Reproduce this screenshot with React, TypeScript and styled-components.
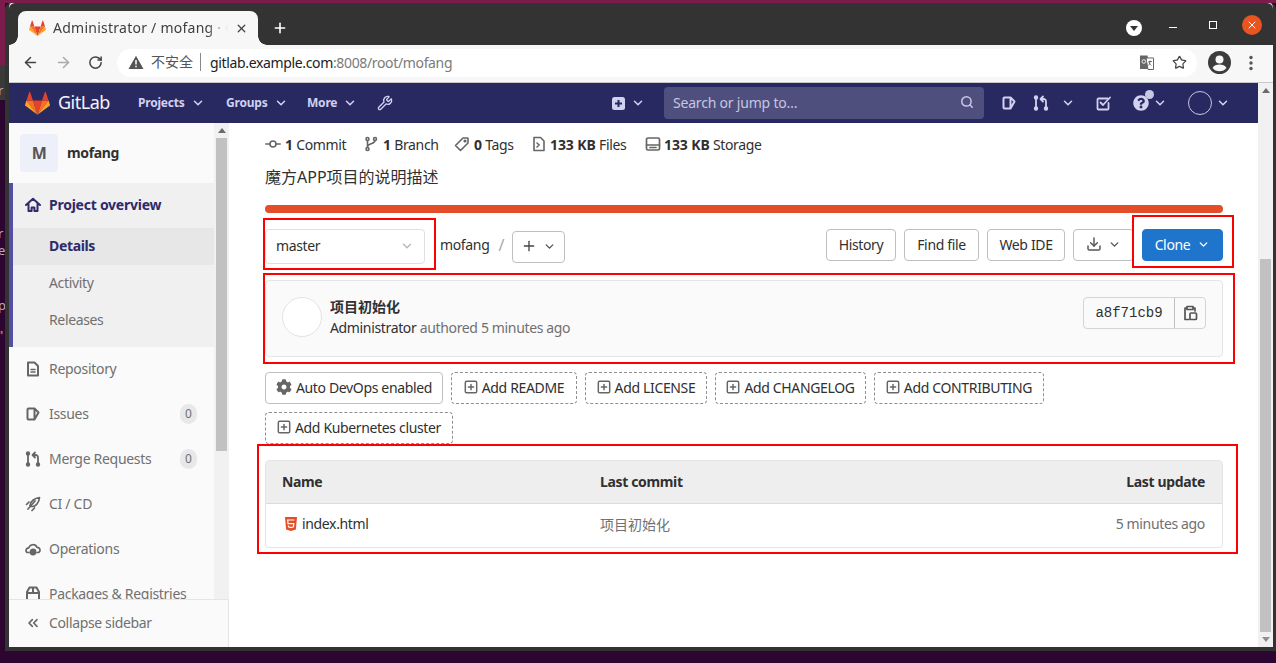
import React from "react";
import styled, { createGlobalStyle } from "styled-components";
import { ArrowLeft, ArrowRight, RotateCw, Star, X, Plus, ChevronDown, Search, Wrench, Download, ChevronsLeft } from "lucide-react";
import { FaCog, FaQuestionCircle } from "react-icons/fa";

const FONT = `"Noto Sans", "Noto Sans CJK SC", sans-serif`;

const GlobalStyle = createGlobalStyle`
  html, body { margin: 0; padding: 0; width: 1276px; height: 663px; overflow: hidden; background: #2c0630; }
  body { font-family: ${FONT}; font-size: 14px; letter-spacing: -0.35px; color: #303030; }
  * { box-sizing: border-box; }
`;

const Desktop = styled.div`
  display: flex; width: 1276px; height: 663px; overflow: hidden;
  background: linear-gradient(to right, #7c1c4c 0, #7c1c4c 100%) top / 100% 3px no-repeat, #2c0630;
`;
const Gutter = styled.div`
  width: 5px; flex: none; padding-top: 83px; display: flex; flex-direction: column; overflow: hidden;
  background: linear-gradient(to bottom, #7c1c4c 0, #7c1c4c 65px, #3a3a3a 65px, #3a3a3a 100px, #2c0630 100px);
`;
const GutterGlyph = styled.span<{ $gap: number }>`
  font-size: 13px; line-height: 14px; color: #b9aebb; margin-left: -2px; margin-bottom: ${p => p.$gap}px;
`;
const BrowserWindow = styled.div`
  width: 1271px; height: 648px; margin-top: 3px; flex: none; display: flex; flex-direction: column;
  background: #fff; border: solid #333; border-width: 0 3px 4px 4px; border-radius: 6px 6px 0 0; position: relative;
`;
const TitleBar = styled.div`
  height: 42px; flex: none; background: #333; display: flex; align-items: flex-end; padding-left: 9px; color: #fff;
  border-radius: 6px 6px 0 0;
`;
const Tab = styled.div`
  position: relative; width: 240px; height: 34px; background: #f7f7f7; border-radius: 8px 8px 0 0;
  display: flex; align-items: center; padding: 0 10px 0 11px; gap: 7px; color: #3c4043; font-size: 14px; letter-spacing: 0.25px;
  &::before, &::after { content: ""; position: absolute; bottom: 0; width: 9px; height: 9px; }
  &::before { left: -9px; background: radial-gradient(circle at 0 0, #333 8.5px, #f7f7f7 9px); }
  &::after { right: -9px; background: radial-gradient(circle at 100% 0, #333 8.5px, #f7f7f7 9px); }
`;
const TabTitle = styled.span`
  flex: 1; white-space: nowrap; overflow: hidden; padding-bottom: 2px;
  mask-image: linear-gradient(to right, #000 88%, transparent 100%);
`;
const NewTab = styled.div`
  width: 16px; height: 16px; margin: 0 0 9px 14px; display: flex;
`;
const TitleSpacer = styled.div`flex: 1;`;
const ProfileDot = styled.div`
  width: 16px; height: 16px; border-radius: 50%; background: #fff; margin: 0 11px 9px 0; display: flex; align-items: center; justify-content: center;
  &::after { content: ""; border: 4px solid transparent; border-top: 5px solid #333; border-bottom: 0; }
`;
const WinBtn = styled.div`
  width: 40px; height: 34px; display: flex; align-items: center; justify-content: center; padding-bottom: 6px;
`;
const MinLine = styled.div`width: 8px; height: 1px; background: #fff; margin-top: 4px;`;
const MaxBox = styled.div`width: 8px; height: 8px; border: 1px solid #fff;`;
const CloseCircle = styled.div`
  width: 20px; height: 20px; border-radius: 50%; background: #e95420; display: flex; align-items: center; justify-content: center; margin: 0 11px 10px 9px;
`;
const Toolbar = styled.div`
  height: 38px; flex: none; background: #f7f7f7; border-bottom: 1px solid #c8c8c8; display: flex; align-items: center; padding: 0 0 1px 13px;
`;
const ToolBtn = styled.div<{ $w: number; $pl?: number }>`
  width: ${p => p.$w}px; padding-left: ${p => p.$pl ?? 0}px; margin-bottom: 1px; flex: none; display: flex; align-items: center;
`;
const UrlPill = styled.div`
  width: 1080px; height: 28px; flex: none; border-radius: 14px; background: #fff; display: flex; align-items: center; padding: 0 10px 2px 11px;
  font-size: 14px; color: #7a7a7a;
`;
const InsecureText = styled.span`
  margin-left: 7px; color: #555; padding-right: 7px; border-right: 1px solid #888; line-height: 18px; margin-right: 9px; letter-spacing: 0; font-size: 14px;
`;
const Host = styled.span`color: #202124;`;
const PillSpacer = styled.div`flex: 1;`;
const PillIcon = styled.div<{ $mr: number }>`display: flex; margin-right: ${p => p.$mr}px;`;
const Viewport = styled.div`flex: 1; display: flex; min-height: 0;`;
const Page = styled.div`flex: 1; min-width: 0; display: flex; flex-direction: column;`;
const Track = styled.div<{ $w: number }>`
  width: ${p => p.$w}px; flex: none; background: #f1f1f1; display: flex; flex-direction: column; align-items: center;
`;
const ArrowUp = styled.div`
  flex: none; margin-top: 5px; border: 4px solid transparent; border-top: 0; border-bottom: 5px solid #6b6b6b;
`;
const ArrowDown = styled.div`
  flex: none; margin-top: auto; margin-bottom: 5px; border: 4px solid transparent; border-bottom: 0; border-top: 5px solid #8f8f8f;
`;
const Thumb = styled.div<{ $top: number; $h: number }>`
  width: 11px; height: ${p => p.$h}px; margin-top: ${p => p.$top}px; background: #c1c1c1; flex: none;
`;
const NavBar = styled.div`
  height: 40px; flex: none; background: #292961; display: flex; align-items: center; padding: 0 28px 0 16px; color: #fff;
`;
const Brand = styled.div`
  font-size: 18px; letter-spacing: -0.5px; color: #f4f4fb; margin: 0 27px 0 8px; width: 53px; white-space: nowrap; padding-bottom: 2px;
`;
const NavLink = styled.div<{ $w: number }>`
  width: ${p => p.$w}px; flex: none; display: flex; align-items: center; gap: 6px; color: #d1d1f0; font-size: 12px; font-weight: 700; letter-spacing: -0.2px; white-space: nowrap;
  padding-bottom: 1px;
`;
const NavIcon = styled.div<{ $w: number; $gap?: number }>`
  width: ${p => p.$w}px; gap: ${p => p.$gap ?? 0}px; flex: none; display: flex; align-items: center; position: relative;
`;
const NavSpacer = styled.div`flex: 1;`;
const SearchBox = styled.div`
  width: 320px; height: 32px; flex: none; border-radius: 4px; background: #4f4f7d; display: flex; align-items: center; justify-content: space-between;
  padding: 0 10px 2px 9px; color: #c6c6e4; font-size: 14px; margin-right: 17px; letter-spacing: -0.2px;
`;
const HelpDot = styled.span`
  position: absolute; left: 12px; top: -5px; width: 9px; height: 9px; border-radius: 50%; background: #c8c8e6;
`;
const UserCircle = styled.div`
  width: 24px; height: 24px; border-radius: 50%; border: 1px solid #c6c6e4; flex: none;
`;
const Body = styled.div`flex: 1; min-height: 0; display: flex;`;
const Sidebar = styled.aside`
  width: 220px; flex: none; background: #fafafa; display: flex; flex-direction: column; overflow: hidden;
`;
const SideTop = styled.div`flex: 1; min-height: 0; display: flex;`;
const SideNav = styled.nav`flex: 1; min-width: 0; overflow: hidden; display: flex; flex-direction: column;`;
const ProjectHead = styled.div`
  height: 60px; flex: none; display: flex; align-items: center; padding: 0 0 0 11px; gap: 9px; font-weight: 700; color: #303030;
`;
const ProjectName = styled.span`padding-bottom: 2px;`;
const ProjectAvatar = styled.div`
  width: 38px; height: 38px; border-radius: 4px; background: #eef0f9; display: flex; align-items: center; justify-content: center;
  font-size: 16px; font-weight: 700; color: #555;
`;
const ActiveGroup = styled.div`
  flex: none; background: #f0f0f0; border-left: 4px solid #554fa3; padding-bottom: 8px; display: flex; flex-direction: column;
`;
const GroupHead = styled.div`
  height: 45px; display: flex; align-items: center; gap: 8px; padding: 0 0 2px 12px; font-weight: 700; color: #2f2a6b; letter-spacing: -0.25px;
`;
const SubItem = styled.div<{ $active?: boolean }>`
  height: 37px; display: flex; align-items: center; padding: 0 0 2px 36px;
  color: ${p => (p.$active ? "#2f2a6b" : "#707070")}; font-weight: ${p => (p.$active ? 700 : 400)};
  background: ${p => (p.$active ? "#e7e7e7" : "transparent")};
`;
const SideItem = styled.div`
  height: 45px; flex: none; display: flex; align-items: center; gap: 8px; padding: 0 17px 2px 16px; color: #707070; letter-spacing: -0.3px;
`;
const ItemLabel = styled.span`flex: 1; white-space: nowrap;`;
const Badge = styled.span`
  width: 17px; height: 20px; border-radius: 10px; background: #e8e8e8; font-size: 12px; display: flex; align-items: center; justify-content: center; color: #707070; letter-spacing: 0;
`;
const Collapse = styled.div`
  height: 48px; flex: none; border-top: 1px solid #e5e5e5; border-right: 1px solid #e5e5e5; display: flex; align-items: center; gap: 8px; padding: 0 0 2px 16px; color: #707070;
`;
const Content = styled.main`
  flex: 1; min-width: 0; padding: 11px 35px 0 36px; display: flex; flex-direction: column; background: #fff;
`;
const Stats = styled.div`display: flex; align-items: center; height: 20px;`;
const Stat = styled.div<{ $w: number; $gap?: number }>`
  width: ${p => p.$w}px; flex: none; display: flex; align-items: center; gap: ${p => p.$gap ?? 4}px; white-space: nowrap; color: #303030;
`;
const Strong = styled.b`font-weight: 700; letter-spacing: -0.1px;`;
const Description = styled.p`
  margin: 12px 0 0; font-size: 16px; line-height: 22px; letter-spacing: 0; color: #303030;
`;
const LangBar = styled.div`
  margin-top: 17px; height: 8px; border-radius: 4px; background: #e44d2a; flex: none;
`;
const TreeRow = styled.div`
  margin-top: 16px; height: 35px; display: flex; align-items: flex-start; flex: none;
`;
const BranchSelect = styled.div`
  width: 160px; height: 35px; border: 1px solid #dfdfdf; border-radius: 4px; display: flex; align-items: center; justify-content: space-between; padding: 0 10px 2px; background: #fff;
  color: #303030;
`;
const Crumb = styled.span`margin: 7px 0 0 15px; line-height: 18px;`;
const Slash = styled.span`margin: 7px 8px 0 9px; color: #a7a7a7; font-size: 16px; line-height: 18px;`;
const Btn = styled.div<{ $w: number; $mr?: number }>`
  width: ${p => p.$w}px; margin-right: ${p => p.$mr ?? 8}px; height: 32px; flex: none; border: 1px solid #bfbfbf; border-radius: 4px; background: #fff;
  display: flex; align-items: center; justify-content: center; gap: 6px; color: #303030; white-space: nowrap; padding-bottom: 2px;
`;
const PlusBtn = styled(Btn)`margin-top: 2px;`;
const RowSpacer = styled.div`flex: 1;`;
const CloneBtn = styled(Btn)`
  background: #1f75cb; border-color: #1f75cb; color: #fff; margin-right: 0; gap: 7px;
`;
const CommitBox = styled.div`
  margin-top: 16px; height: 77px; flex: none; border: 1px solid #e5e5e5; border-radius: 4px; background: #fafafa;
  display: flex; align-items: flex-start; padding: 16px 16px 0 16px;
`;
const CommitAvatar = styled.div`
  width: 40px; height: 40px; border-radius: 50%; border: 1px solid #e3e3e3; background: #fff; flex: none; margin-right: 8px;
`;
const CommitInfo = styled.div`flex: 1; display: flex; flex-direction: column;`;
const CommitTitle = styled.div`font-weight: 700; line-height: 20px; letter-spacing: 0;`;
const CommitMeta = styled.div`margin-top: 1px; line-height: 20px; color: #707070;`;
const Author = styled.span`color: #303030;`;
const ShaGroup = styled.div`
  display: flex; height: 32px; width: 123px; flex: none; border: 1px solid #d4d4d4; border-radius: 4px; background: #fafafa;
`;
const Sha = styled.div`
  width: 91px; display: flex; align-items: center; justify-content: center; border-right: 1px solid #bfbfbf;
  font-family: "Liberation Mono", "DejaVu Sans Mono", monospace; font-size: 14px; letter-spacing: 0; color: #303030;
`;
const CopyBtn = styled.div`flex: 1; display: flex; align-items: center; justify-content: center;`;
const ActionRows = styled.div`
  margin-top: 15px; display: flex; flex-direction: column; gap: 8px; flex: none;
`;
const ActionRow = styled.div`display: flex; gap: 8px;`;
const ActionBtn = styled.div<{ $w: number; $dashed?: boolean }>`
  width: ${p => p.$w}px; height: 32px; flex: none; border: 1px ${p => (p.$dashed ? "dashed #8f8f8f" : "solid #bfbfbf")}; border-radius: 4px;
  display: flex; align-items: center; justify-content: center; gap: 4px; white-space: nowrap; color: #303030; padding-bottom: 2px;
`;
const FilesTable = styled.div`
  margin-top: 16px; height: 88px; flex: none; border: 1px solid #e5e5e5; border-radius: 4px; display: flex; flex-direction: column; overflow: hidden;
`;
const TableHead = styled.div`
  height: 43px; flex: none; background: #eee; border-bottom: 1px solid #dcdcdc; display: grid; grid-template-columns: 318px 1fr auto; align-items: center; padding: 0 17px 2px 16px;
  font-weight: 700; color: #303030;
`;
const TableRow = styled.div`
  flex: 1; display: grid; grid-template-columns: 318px 1fr auto; align-items: center; padding: 0 17px 4px 16px;
`;
const FileName = styled.div`display: flex; align-items: center; gap: 4px; padding-left: 2px; color: #303030;`;
const Muted = styled.div`color: #707070; letter-spacing: 0;`;
const MutedTime = styled.div`color: #707070;`;
const Annotation = styled.div<{ $x: number; $y: number; $w: number; $h: number }>`
  position: absolute; left: ${p => p.$x}px; top: ${p => p.$y}px; width: ${p => p.$w}px; height: ${p => p.$h}px; border: 2px solid #f00; pointer-events: none;
`;

const Tanuki = ({ size }: { size: number }) => (
  <svg width={size} height={size} viewBox="0 0 36 36" style={{ flex: "none" }}>
    <path d="M18 34.1L24.6 13.7H11.4z" fill="#E24329" />
    <path d="M18 34.1L11.4 13.7H2.1z" fill="#FC6D26" />
    <path d="M2.1 13.7L.1 19.9c-.2.6 0 1.2.5 1.5L18 34.1z" fill="#FCA326" />
    <path d="M2.1 13.7h9.3L7.4 1.4c-.2-.6-1.1-.6-1.3 0z" fill="#E24329" />
    <path d="M18 34.1l6.6-20.4h9.3z" fill="#FC6D26" />
    <path d="M33.9 13.7l2 6.2c.2.6 0 1.2-.5 1.5L18 34.1z" fill="#FCA326" />
    <path d="M33.9 13.7h-9.3l4-12.3c.2-.6 1.1-.6 1.3 0z" fill="#E24329" />
  </svg>
);

type IP = { c?: string; s?: number };
const S = ({ c = "#666", s = 16, children, w = 1.8 }: IP & { children: React.ReactNode; w?: number }) => (
  <svg width={s} height={s} viewBox="0 0 16 16" fill="none" stroke={c} strokeWidth={w} strokeLinecap="round" strokeLinejoin="round" style={{ flex: "none" }}>
    {children}
  </svg>
);
const HomeI = (p: IP) => <S {...p} w={2}><path d="M1 8 8 1.8 15 8M3.5 6.5V14H6.6v-3.5h2.8V14h3.1V6.5" /></S>;
const DocI = (p: IP) => <S {...p} w={2}><path d="M3 1.5h6.5L13 5v9.5H3z" /><path d="M6 8.5h4M6 11h4" strokeWidth="1.5" /></S>;
const IssueI = (p: IP) => <S {...p} w={2}><path d="M9.5 2.5H3.5a1 1 0 0 0-1 1v9a1 1 0 0 0 1 1h6M9.5 2.5l4 4-4 7z" /></S>;
const MergeI = (p: IP) => (
  <S {...p}>
    <circle cx="3" cy="2.5" r="1.3" fill={p.c ?? "#666"} /><circle cx="3" cy="13.5" r="1.3" fill={p.c ?? "#666"} /><circle cx="13" cy="13.5" r="1.3" fill={p.c ?? "#666"} />
    <path d="M3 3v10M13 13V6.5a2.5 2.5 0 0 0-2.5-2.5H8M10 1.5 7.5 4 10 6.5" />
  </S>
);
const RocketI = (p: IP) => <S {...p} w={1.7}><path d="M14.5 1.5C10 2 5.5 5 5 9.5c2 1.8 5 1 7-1.5 1.6-2 2.3-4.3 2.5-6.5z" /><path d="M10 5 3 13M1.5 8.5 4 6M7 14.5 9.5 12" /></S>;
const CloudI = (p: IP) => <S {...p} w={1.7}><path d="M4 11.5H2.8A1.8 1.8 0 0 1 1 9.5 3 3 0 0 1 3.8 6.8 4.4 4.4 0 0 1 12 6.3 2.7 2.7 0 0 1 15 9.2a2.2 2.2 0 0 1-2.3 2.3H12" /><circle cx="8" cy="11" r="2.6" fill={p.c ?? "#666"} /></S>;
const PackageI = (p: IP) => <S {...p} w={2}><path d="M2 14.5V6l2.5-4.5h7L14 6v8.5zM2 7h12M8 1.5V7" /></S>;
const CommitI = (p: IP) => <S {...p} w={1.6}><circle cx="8" cy="8" r="3" /><path d="M.8 8H5M11 8h4.2" /></S>;
const BranchI = (p: IP) => <S {...p} w={1.6}><circle cx="4.5" cy="3" r="1.5" /><circle cx="4.5" cy="13" r="1.5" /><circle cx="12" cy="3" r="1.5" /><path d="M4.5 4.5v7M12 4.5C12 8 5 7.5 4.5 10.5" /></S>;
const TagI = (p: IP) => <S {...p} w={1.6}><path d="M9 2h4.5a.5.5 0 0 1 .5.5V7l-7.5 7.5L1.5 9.5z" /><circle cx="11" cy="5" r=".8" /></S>;
const FileI = (p: IP) => <S {...p} w={1.6}><path d="M3 1.5h6.5L13 5v9.5H3z" /><path d="M6 7l2.2 2L6 11" /></S>;
const StorageI = (p: IP) => <S {...p} w={1.7}><rect x="1.5" y="2" width="13" height="12" rx="1.5" /><path d="M1.5 9h13M5 11.5h6" /></S>;
const AddI = () => <S c="#666" w={1.7} s={14}><rect x="1.5" y="1.5" width="13" height="13" rx="1.5" /><path d="M8 5v6M5 8h6" /></S>;
const CopyI = () => <S c="#555" w={1.7}><path d="M5 3H3v11.5h4M11 3h2v3M5 1.5h6v3H5z" /><rect x="8" y="8" width="6.5" height="6.5" rx="1" /></S>;
const TodoI = (p: IP) => <S {...p} w={1.8}><path d="M12.5 8v5.5a1 1 0 0 1-1 1h-9a1 1 0 0 1-1-1v-9a1 1 0 0 1 1-1h9" /><path d="M4.5 7.5 7 10l7-7.5" /></S>;
const PlusSquareI = () => (
  <svg width="13" height="13" viewBox="0 0 13 13" style={{ flex: "none" }}>
    <rect width="13" height="13" rx="2.5" fill="#d1d1f0" />
    <path d="M6.5 3v7M3 6.5h7" stroke="#292961" strokeWidth="2" />
  </svg>
);
const Html5I = () => (
  <svg width="14" height="16" viewBox="0 0 14 16" style={{ flex: "none" }}>
    <path d="M1 1h12l-1.1 12.4L7 15l-4.900-1.600z" fill="#e44d26" />
    <path d="M10.3 4H3.7l.3 3.600h5.800l-.3 3.200L7 11.600l-2.500-.8-.1-1.300" fill="none" stroke="#fff" strokeWidth="1.2" />
  </svg>
);
const WarnI = () => (
  <svg width="16" height="15" viewBox="0 0 16 15" style={{ flex: "none" }}>
    <path d="M8 .8 15.5 14H.5z" fill="#555" />
    <path d="M8 5v4.5M8 10.8v1.4" stroke="#fff" strokeWidth="1.5" />
  </svg>
);
const TranslateI = () => (
  <svg width="14" height="15" viewBox="0 0 14 15" style={{ flex: "none" }}>
    <path d="M0 .5h7.5l3 13.500H0z" fill="#666" />
    <path d="M6 3h7.500v11.500H8z" fill="#fff" stroke="#666" />
    <circle cx="3.8" cy="6.5" r="1.8" fill="none" stroke="#fff" strokeWidth=".9" />
    <path d="M8.5 6.5h3.5M10 5.5c0 2.5-.5 4-1.5 5M9 7c.5 2 1.5 3 2.5 3.5" fill="none" stroke="#555" strokeWidth=".8" />
  </svg>
);
const AccountI = () => (
  <svg width="23" height="23" viewBox="0 0 23 23" style={{ flex: "none" }}>
    <circle cx="11.5" cy="11.5" r="11.5" fill="#3c3c3c" />
    <circle cx="11.5" cy="8.5" r="4" fill="#f7f7f7" />
    <path d="M4.5 17c1.500-2.700 4-3.500 7-3.500s5.500.8 7 3.500c-1.500 2-4 3.300-7 3.300s-5.500-1.300-7-3.300z" fill="#f7f7f7" />
  </svg>
);
const DotsI = () => (
  <svg width="4" height="16" viewBox="0 0 4 16" style={{ flex: "none", marginBottom: 1 }}>
    <circle cx="2" cy="2.5" r="1.7" fill="#555" /><circle cx="2" cy="8" r="1.7" fill="#555" /><circle cx="2" cy="13.5" r="1.7" fill="#555" />
  </svg>
);
const Chev = ({ c = "#d1d1f0", s = 14 }: IP) => <ChevronDown size={s} color={c} strokeWidth={2.6} style={{ flex: "none" }} />;

const sideItems = [
  { label: "Repository", icon: <DocI /> },
  { label: "Issues", icon: <IssueI />, badge: "0" },
  { label: "Merge Requests", icon: <MergeI />, badge: "0" },
  { label: "CI / CD", icon: <RocketI /> },
  { label: "Operations", icon: <CloudI /> },
  { label: "Packages & Registries", icon: <PackageI /> },
];

const addButtons: { label: string; w: number }[] = [
  { label: "Add README", w: 126 },
  { label: "Add LICENSE", w: 122 },
  { label: "Add CHANGELOG", w: 151 },
  { label: "Add CONTRIBUTING", w: 170 },
];

export default function App() {
  return (
    <Desktop>
      <GlobalStyle />
      <Gutter>
        <GutterGlyph $gap={129}>r</GutterGlyph>
        <GutterGlyph $gap={3}>r</GutterGlyph>
        <GutterGlyph $gap={41}>e</GutterGlyph>
        <GutterGlyph $gap={16}>p</GutterGlyph>
        <GutterGlyph $gap={0}>"</GutterGlyph>
      </Gutter>
      <BrowserWindow>
        <TitleBar>
          <Tab>
            <Tanuki size={17} />
            <TabTitle>Administrator / mofang · GitLab</TabTitle>
            <X size={13} color="#444" strokeWidth={2.4} />
          </Tab>
          <NewTab><Plus size={16} color="#fff" strokeWidth={2.4} /></NewTab>
          <TitleSpacer />
          <ProfileDot />
          <WinBtn><MinLine /></WinBtn>
          <WinBtn><MaxBox /></WinBtn>
          <CloseCircle><X size={12} color="#fff" strokeWidth={2} /></CloseCircle>
        </TitleBar>
        <Toolbar>
          <ToolBtn $w={33}><ArrowLeft size={17} color="#444" strokeWidth={2.2} /></ToolBtn>
          <ToolBtn $w={33}><ArrowRight size={17} color="#aaa" strokeWidth={2.2} /></ToolBtn>
          <ToolBtn $w={29}><RotateCw size={15} color="#444" strokeWidth={2.4} /></ToolBtn>
          <UrlPill>
            <WarnI />
            <InsecureText>不安全</InsecureText>
            <Host>gitlab.example.com</Host>:8008/root/mofang
            <PillSpacer />
            <PillIcon $mr={18}><TranslateI /></PillIcon>
            <PillIcon $mr={0}><Star size={15} color="#444" strokeWidth={2} /></PillIcon>
          </UrlPill>
          <ToolBtn $w={52} $pl={11}><AccountI /></ToolBtn>
          <DotsI />
        </Toolbar>
        <Viewport>
          <Page>
            <NavBar>
              <Tanuki size={25} />
              <Brand>GitLab</Brand>
              <NavLink $w={88}>Projects<Chev /></NavLink>
              <NavLink $w={81}>Groups<Chev /></NavLink>
              <NavLink $w={70}>More<Chev /></NavLink>
              <NavIcon $w={20}><Wrench size={16} color="#d1d1f0" strokeWidth={2} /></NavIcon>
              <NavSpacer />
              <NavIcon $w={52} $gap={6}><PlusSquareI /><Chev /></NavIcon>
              <SearchBox>Search or jump to…<Search size={14} color="#c6c6e4" strokeWidth={2.6} /></SearchBox>
              <NavIcon $w={32}><IssueI c="#d1d1f0" /></NavIcon>
              <NavIcon $w={63} $gap={12}><MergeI c="#d1d1f0" /><Chev /></NavIcon>
              <NavIcon $w={37}><TodoI c="#d1d1f0" /></NavIcon>
              <NavIcon $w={55} $gap={4}><FaQuestionCircle size={16} color="#d1d1f0" /><HelpDot /><Chev /></NavIcon>
              <NavIcon $w={42} $gap={4}><UserCircle /><Chev /></NavIcon>
            </NavBar>
            <Body>
              <Sidebar>
                <SideTop>
                  <SideNav>
                    <ProjectHead><ProjectAvatar>M</ProjectAvatar><ProjectName>mofang</ProjectName></ProjectHead>
                    <ActiveGroup>
                      <GroupHead><HomeI c="#2f2a6b" />Project overview</GroupHead>
                      <SubItem $active>Details</SubItem>
                      <SubItem>Activity</SubItem>
                      <SubItem>Releases</SubItem>
                    </ActiveGroup>
                    {sideItems.map(i => (
                      <SideItem key={i.label}>
                        {i.icon}
                        <ItemLabel>{i.label}</ItemLabel>
                        {i.badge && <Badge>{i.badge}</Badge>}
                      </SideItem>
                    ))}
                  </SideNav>
                  <Track $w={15}>
                    <ArrowUp />
                    <Thumb $top={5} $h={313} />
                  </Track>
                </SideTop>
                <Collapse><ChevronsLeft size={16} color="#666" strokeWidth={2.4} />Collapse sidebar</Collapse>
              </Sidebar>
              <Content>
                <Stats>
                  <Stat $w={98}><CommitI /><span><Strong>1</Strong> Commit</span></Stat>
                  <Stat $w={91}><BranchI /><span><Strong>1</Strong> Branch</span></Stat>
                  <Stat $w={77}><TagI /><span><Strong>0</Strong> Tags</span></Stat>
                  <Stat $w={114} $gap={3}><FileI /><span><Strong>133 KB</Strong> Files</span></Stat>
                  <Stat $w={120} $gap={3}><StorageI /><span><Strong>133 KB</Strong> Storage</span></Stat>
                </Stats>
                <Description>魔方APP项目的说明描述</Description>
                <LangBar />
                <TreeRow>
                  <BranchSelect>master<Chev c="#bbb" s={14} /></BranchSelect>
                  <Crumb>mofang</Crumb>
                  <Slash>/</Slash>
                  <PlusBtn $w={53} $mr={0}><Plus size={16} color="#444" strokeWidth={2} /><Chev c="#555" s={13} /></PlusBtn>
                  <RowSpacer />
                  <Btn $w={70}>History</Btn>
                  <Btn $w={75}>Find file</Btn>
                  <Btn $w={78}>Web IDE</Btn>
                  <Btn $w={61}><Download size={16} color="#555" strokeWidth={2.2} /><Chev c="#555" s={13} /></Btn>
                  <CloneBtn $w={81}>Clone<Chev c="#fff" s={13} /></CloneBtn>
                </TreeRow>
                <CommitBox>
                  <CommitAvatar />
                  <CommitInfo>
                    <CommitTitle>项目初始化</CommitTitle>
                    <CommitMeta><Author>Administrator</Author> authored 5 minutes ago</CommitMeta>
                  </CommitInfo>
                  <ShaGroup>
                    <Sha>a8f71cb9</Sha>
                    <CopyBtn><CopyI /></CopyBtn>
                  </ShaGroup>
                </CommitBox>
                <ActionRows>
                  <ActionRow>
                    <ActionBtn $w={178}><FaCog size={16} color="#666" />Auto DevOps enabled</ActionBtn>
                    {addButtons.map(b => (
                      <ActionBtn key={b.label} $dashed $w={b.w}><AddI />{b.label}</ActionBtn>
                    ))}
                  </ActionRow>
                  <ActionRow>
                    <ActionBtn $dashed $w={188}><AddI />Add Kubernetes cluster</ActionBtn>
                  </ActionRow>
                </ActionRows>
                <FilesTable>
                  <TableHead><span>Name</span><span>Last commit</span><span>Last update</span></TableHead>
                  <TableRow>
                    <FileName><Html5I />index.html</FileName>
                    <Muted>项目初始化</Muted>
                    <MutedTime>5 minutes ago</MutedTime>
                  </TableRow>
                </FilesTable>
              </Content>
            </Body>
          </Page>
          <Track $w={15}>
            <ArrowUp />
            <Thumb $top={166} $h={373} />
            <ArrowDown />
          </Track>
        </Viewport>
      </BrowserWindow>
      <Annotation $x={263} $y={218} $w={173} $h={52} />
      <Annotation $x={1132} $y={215} $w={102} $h={53} />
      <Annotation $x={263} $y={273} $w={972} $h={91} />
      <Annotation $x={257} $y={444} $w={981} $h={110} />
    </Desktop>
  );
}
